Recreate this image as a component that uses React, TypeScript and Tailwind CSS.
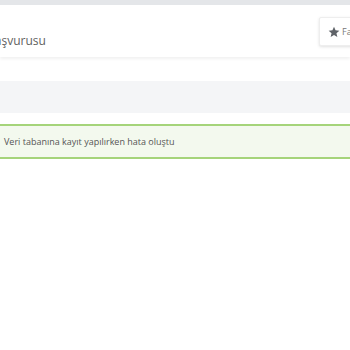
import React from "react";

export default function App() {
  return (
    <div className="w-[350px] h-[350px] bg-white overflow-hidden" style={{ fontFamily: '"Open Sans", sans-serif' }}>
      <div className="h-[5px] bg-[#e4e6e9]" />
      <div className="relative h-[52px] bg-white shadow-[0_2px_3px_rgba(0,0,0,0.06)] flex items-end pb-[10px]">
        <span className="ml-[-13px] text-[12px] leading-none text-[#5f5f5f] whitespace-nowrap">Başvurusu</span>
        <div className="absolute left-[319px] top-[12px] h-[29px] w-[90px] bg-white rounded-[2px] border border-[#eee] shadow-[0_1px_3px_rgba(0,0,0,0.12)] flex items-center pl-[8px] gap-[2px]">
          <svg className="shrink-0" width="12" height="12" viewBox="0 0 24 24" fill="#5f6368">
            <path d="M12 1.5l3.1 7.1 7.6.7-5.8 5 1.8 7.5L12 17.8 5.3 21.8l1.8-7.5-5.8-5 7.6-.7z" />
          </svg>
          <span className="text-[9px] text-[#777] whitespace-nowrap">Favorilere</span>
        </div>
      </div>
      <div className="h-[24px]" />
      <div className="h-[32px] bg-[#f4f5f7]" />
      <div className="h-[11px]" />
      <div className="h-[35px] bg-[#f3f9ee] border-y-2 border-[#a5d47a] flex items-center pl-[4px]">
        <span className="text-[9px] text-[#555] whitespace-nowrap">Veri tabanına kayıt yapılırken hata oluştu</span>
      </div>
    </div>
  );
}
